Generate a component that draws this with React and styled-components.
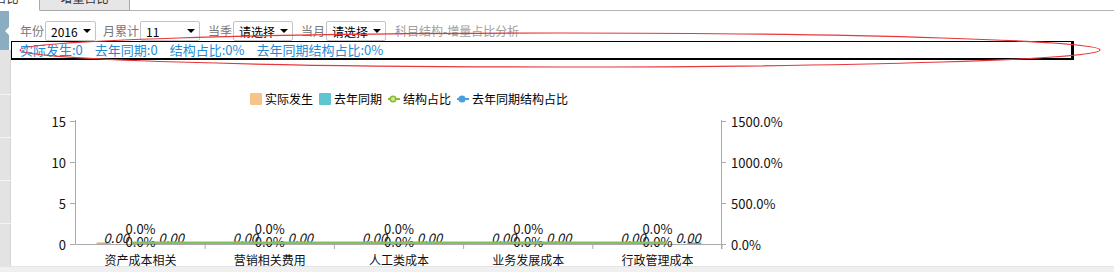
import React from "react";
import styled, { createGlobalStyle } from "styled-components";

const GlobalStyle = createGlobalStyle`
  html, body { margin: 0; padding: 0; background: #fff; }
  body {
    font-family: "Microsoft YaHei", "Noto Sans CJK SC", sans-serif;
    overflow: hidden;
  }
`;

const Page = styled.div`
  position: relative;
  width: 1114px;
  height: 272px;
  display: flex;
  flex-direction: column;
  overflow: hidden;
`;

const TabBar = styled.div`
  display: flex;
  height: 11px;
  margin-left: -50px;
  flex-shrink: 0;
`;
const Tab = styled.div`
  width: 90px;
  height: 11px;
  box-sizing: border-box;
  display: flex;
  align-items: flex-end;
  justify-content: center;
  overflow: hidden;
  font-size: 12px;
  line-height: 12px;
  color: #333;
  background: ${(p) => (p.$active ? "#fff" : "#e6e6e6")};
  border-right: 1px solid #a9a9a9;
  border-bottom: 1px solid ${(p) => (p.$active ? "#fff" : "#a9a9a9")};
  span { margin-bottom: 6px; }
`;
const TabFill = styled.div`
  flex: 1;
  border-bottom: 1px solid #b4b4b4;
`;

const Body = styled.div`
  display: flex;
  height: 255px;
`;

const Sidebar = styled.div`
  width: 11px;
  display: flex;
  flex-direction: column;
  flex-shrink: 0;
`;
const SideItem = styled.div`
  position: relative;
  height: ${(p) => p.$h}px;
  box-sizing: border-box;
  background: ${(p) =>
    p.$active
      ? "linear-gradient(to right, #8badc2 9px, #fff 9px)"
      : "linear-gradient(to right, #e3e3e3 10px, #d4d4d4 10px)"};
  border-top: ${(p) => (p.$line ? "1px solid #f3f3f3" : "none")};
  ${(p) =>
    p.$active &&
    `
    &::after {
      content: "";
      position: absolute;
      right: 1px;
      top: 15px;
      border-right: 5px solid #fff;
      border-top: 5px solid transparent;
      border-bottom: 5px solid transparent;
    }
  `}
`;

const Content = styled.div`
  flex: 1;
  display: flex;
  flex-direction: column;
  padding: 10px 0 0 9px;
`;

const FilterRow = styled.div`
  display: flex;
  align-items: center;
  height: 20px;
`;
const Label = styled.span`
  font-size: 12px;
  line-height: 20px;
  color: #777;
  margin: 0 1px 0 ${(p) => p.$gap || 0}px;
`;
const Select = styled.div`
  width: ${(p) => p.$w}px;
  height: 20px;
  box-sizing: border-box;
  border: 1px solid #c4c4c4;
  border-radius: 2px;
  display: flex;
  align-items: center;
  justify-content: space-between;
  padding: 0 4px 0 5px;
  font-size: 12px;
  color: #000;
`;
const Caret = styled.span`
  width: 0;
  height: 0;
  border-left: 4px solid transparent;
  border-right: 4px solid transparent;
  border-top: 4px solid #000;
`;
const Title = styled.span`
  font-size: 12px;
  line-height: 20px;
  color: #a0a0a0;
  margin-left: 9px;
`;

const Summary = styled.div`
  width: 1063px;
  height: 19px;
  box-sizing: border-box;
  margin-left: -9px;
  border-style: solid;
  border-color: #000;
  border-width: 1px 3px 2px 1px;
  padding-left: 8px;
  display: flex;
  gap: 12px;
  font-size: 13px;
  line-height: 16px;
  color: #1f8ad6;
`;

const Legend = styled.div`
  display: flex;
  align-items: center;
  height: 14px;
  margin: 32px 0 0 230px;
  font-size: 12px;
  line-height: 14px;
  color: #000;
`;
const LegendItem = styled.div`
  display: flex;
  align-items: center;
  gap: 3px;
  margin-right: 6px;
`;
const Swatch = styled.span`
  width: 12px;
  height: 12px;
  border-radius: 1px;
  background: ${(p) => p.$c};
`;

const Chart = styled.svg`
  display: block;
  margin-left: -9px;
  font-family: "Microsoft YaHei", "Noto Sans CJK SC", sans-serif;
`;

const Footer = styled.div`
  height: 6px;
  box-sizing: border-box;
  background: #f0f0f0;
  border-top: 1px solid #e4e4e4;
`;

const Overlay = styled.svg`
  position: absolute;
  left: 0;
  top: 0;
  pointer-events: none;
`;

const cats = ["资产成本相关", "营销相关费用", "人工类成本", "业务发展成本", "行政管理成本"];
const yTicks = [
  { y: 121, l: "15", r: "1500.0%" },
  { y: 162, l: "10", r: "1000.0%" },
  { y: 203, l: "5", r: "500.0%" },
  { y: 244, l: "0", r: "0.0%" },
];

const LineMarker = ({ color, fill }) => (
  <svg width="12" height="8" viewBox="0 0 12 8">
    <line x1="0" y1="4" x2="12" y2="4" stroke={color} strokeWidth="2" />
    <circle cx="5" cy="4" r="2.8" fill={fill} stroke={color} strokeWidth="1.6" />
  </svg>
);

const App = () => {
  const axis = "#aaa";
  return (
    <Page>
      <GlobalStyle />
      <TabBar>
        <Tab $active><span>结构占比</span></Tab>
        <Tab><span>增量占比</span></Tab>
        <TabFill />
      </TabBar>
      <Body>
        <Sidebar>
          <SideItem $h={39} $active />
          <SideItem $h={44} />
          <SideItem $h={43} $line />
          <SideItem $h={43} $line />
          <SideItem $h={43} $line />
          <SideItem $h={43} $line />
        </Sidebar>
        <Content>
          <FilterRow>
            <Label>年份</Label>
            <Select $w={51}>2016<Caret /></Select>
            <Label $gap={7}>月累计</Label>
            <Select $w={60}>11<Caret /></Select>
            <Label $gap={8}>当季</Label>
            <Select $w={60}>请选择<Caret /></Select>
            <Label $gap={8}>当月</Label>
            <Select $w={60}>请选择<Caret /></Select>
            <Title>科目结构-增量占比分析</Title>
          </FilterRow>
          <Summary>
            <span>实际发生:0</span>
            <span>去年同期:0</span>
            <span>结构占比:0%</span>
            <span>去年同期结构占比:0%</span>
          </Summary>
          <Legend>
            <LegendItem><Swatch $c="#f7c38a" />实际发生</LegendItem>
            <LegendItem><Swatch $c="#5ec6d3" />去年同期</LegendItem>
            <LegendItem><LineMarker color="#8cba30" fill="#d2e79a" />结构占比</LegendItem>
            <LegendItem><LineMarker color="#4a9fe0" fill="#4a9fe0" />去年同期结构占比</LegendItem>
          </Legend>
          <Chart width="1103" height="160" viewBox="11 106 1103 160">
            <line x1="75.5" y1="120" x2="75.5" y2="244" stroke={axis} />
            <line x1="721.5" y1="120" x2="721.5" y2="249" stroke={axis} />
            <line x1="75.5" y1="244.5" x2="721.5" y2="244.5" stroke={axis} />
            {yTicks.map((t) => (
              <g key={t.l} fontSize="13" fill="#111" dominantBaseline="central">
                <line x1="70" y1={t.y + 0.5} x2="75.5" y2={t.y + 0.5} stroke={axis} />
                <line x1="721.5" y1={t.y + 0.5} x2="726" y2={t.y + 0.5} stroke={axis} />
                <text x="66" y={t.y} textAnchor="end">{t.l}</text>
                <text x="731" y={t.y}>{t.r}</text>
              </g>
            ))}
            {cats.map((c, i) => {
              const cx = 76 + 129.2 * (i + 0.5);
              const right = 76 + 129.2 * (i + 1);
              return (
                <g key={c}>
                  <line x1={right} y1="244" x2={right} y2="249" stroke={axis} />
                  <rect x={cx - 44} y="242.5" width="14" height="1.5" fill="#e9a86c" />
                  <rect x={cx + 30} y="242.5" width="14" height="1.5" fill="#4fb4cc" />
                  <text x={cx} y="259" fontSize="12" fill="#111" textAnchor="middle" dominantBaseline="central">{c}</text>
                  <g fontSize="13" fill="#111" dominantBaseline="central">
                    <text x={cx - 37} y="237" fontStyle="italic">0.00</text>
                    <text x={cx} y="228" textAnchor="middle">0.0%</text>
                    <text x={cx} y="241" textAnchor="middle">0.0%</text>
                    <text x={cx + 18} y="237" fontStyle="italic">0.00</text>
                  </g>
                </g>
              );
            })}
            <line x1="132" y1="242.7" x2="667" y2="242.7" stroke="#84bf62" strokeWidth="2.4" />
          </Chart>
        </Content>
      </Body>
      <Footer />
      <Overlay width="1114" height="272">
        <ellipse cx="560" cy="50" rx="540" ry="17" fill="none" stroke="#e8363a" strokeWidth="1.2" />
      </Overlay>
    </Page>
  );
};

export default App;
